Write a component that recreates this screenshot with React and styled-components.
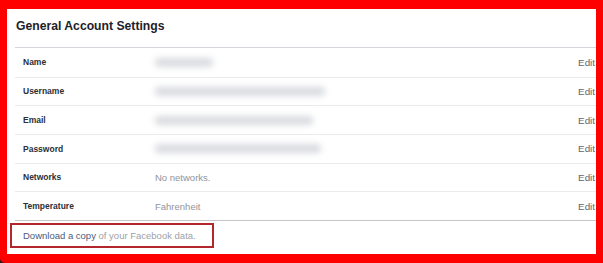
import React from "react";
import styled, { createGlobalStyle } from "styled-components";

const GlobalStyle = createGlobalStyle`
  html, body {
    margin: 0;
    padding: 0;
    background: #2a1a1a;
  }
  #root {
    width: 603px;
    height: 263px;
  }
`;

const Frame = styled.div`
  box-sizing: border-box;
  width: 603px;
  height: 263px;
  border-style: solid;
  border-color: #ff0000;
  border-width: 9px 7px 9px 7px;
  border-radius: 0 0 0 5px;
  background: #ffffff;
  font-family: "Liberation Sans", Arial, sans-serif;
  display: flex;
  flex-direction: column;
`;

const Header = styled.h2`
  box-sizing: border-box;
  margin: 0 0 0 8px;
  height: 39px;
  display: flex;
  align-items: center;
  padding: 0 0 5px 1px;
  font-size: 12.2px;
  font-weight: 700;
  color: #1d2129;
  border-bottom: 1px solid #d3d6db;
`;

const List = styled.div`
  margin-left: 8px;
  border-bottom: 1px solid #c4c6ca;
`;

const Row = styled.div`
  box-sizing: border-box;
  height: 28.67px;
  display: grid;
  grid-template-columns: 132px 1fr auto;
  align-items: center;
  padding: 0 1px 0 8px;
  border-top: ${(p) => (p.$first ? "none" : "1px solid #e9ebee")};
`;

const Label = styled.span`
  font-size: 8.5px;
  font-weight: 700;
  color: #2b2f36;
`;

const Value = styled.span`
  font-size: 9.5px;
  color: #90949c;
`;

const Blur = styled.span`
  display: block;
  height: 9px;
  width: ${(p) => p.$w}px;
  background: #d9dbdf;
  border-radius: 4px;
  filter: blur(3px);
`;

const Edit = styled.a`
  font-size: 9.8px;
  color: #606770;
  text-decoration: none;
`;

const Footer = styled.div`
  padding: 2px 0 0 3px;
`;

const DownloadBox = styled.div`
  box-sizing: border-box;
  width: 204px;
  height: 25px;
  border: 2px solid #b3262e;
  display: flex;
  align-items: center;
  padding-left: 11px;
  font-size: 9.5px;
  color: #9da1a8;
`;

const Strong = styled.span`
  color: #4b5b7c;
`;

const rows = [
  { label: "Name", blur: 58 },
  { label: "Username", blur: 170 },
  { label: "Email", blur: 158 },
  { label: "Password", blur: 166 },
  { label: "Networks", value: "No networks." },
  { label: "Temperature", value: "Fahrenheit" },
];

export default function App() {
  return (
    <>
      <GlobalStyle />
      <Frame>
        <Header>General Account Settings</Header>
        <List>
          {rows.map((r, i) => (
            <Row key={r.label} $first={i === 0}>
              <Label>{r.label}</Label>
              {r.value ? <Value>{r.value}</Value> : <Blur $w={r.blur} />}
              <Edit href="#">Edit</Edit>
            </Row>
          ))}
        </List>
        <Footer>
          <DownloadBox>
            <span>
              <Strong>Download a copy</Strong> of your Facebook data.
            </span>
          </DownloadBox>
        </Footer>
      </Frame>
    </>
  );
}
